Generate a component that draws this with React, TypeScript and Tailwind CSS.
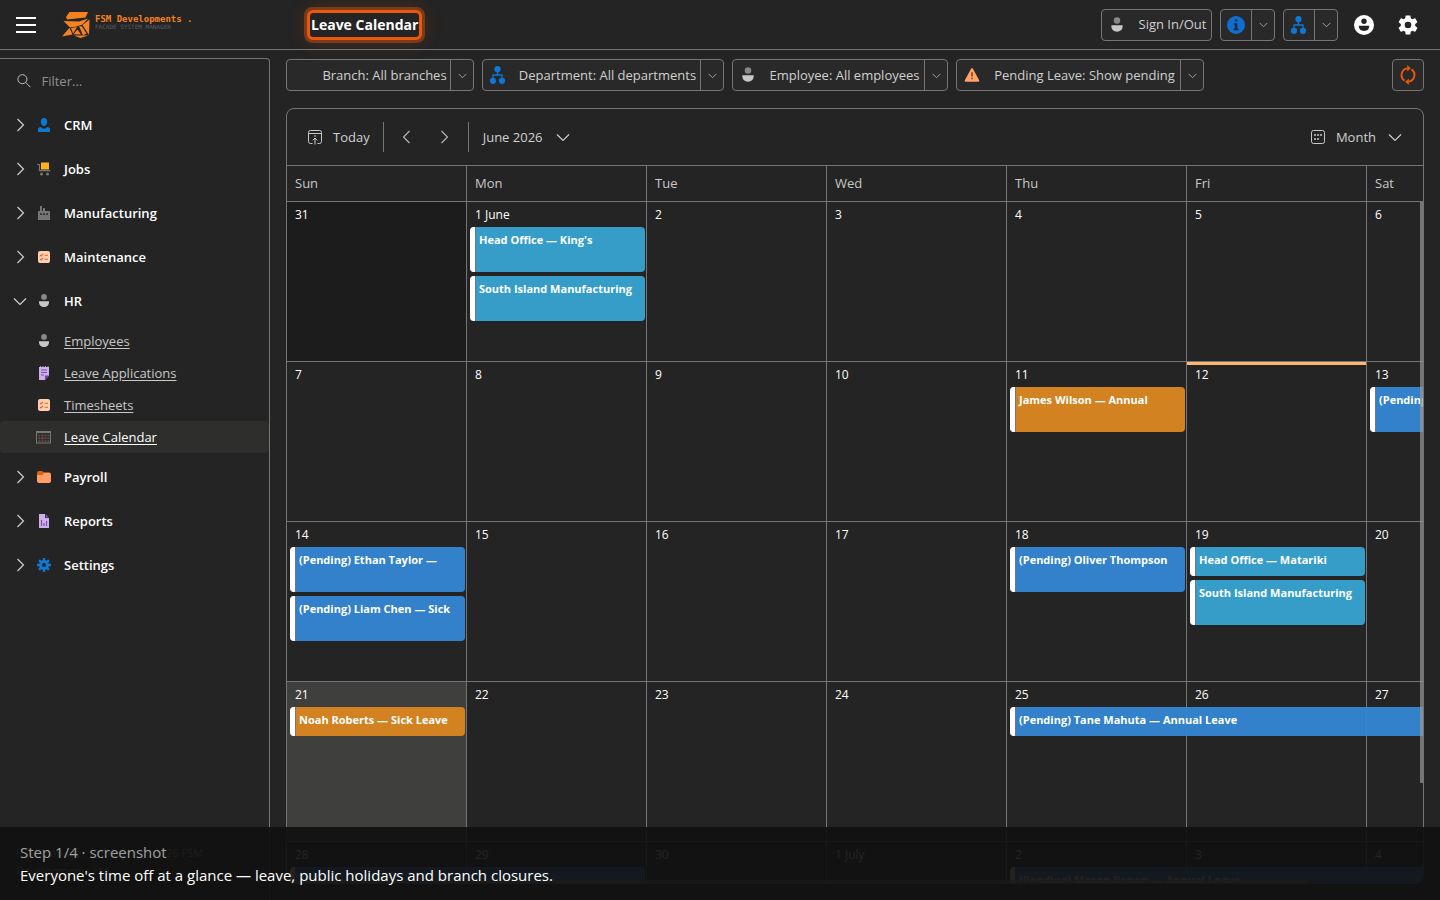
import { useState, type ReactNode } from "react";

type IconProps = { size?: number };

function PersonIcon({ size = 16 }: IconProps) {
  return (
    <svg width={size} height={size} viewBox="0 0 16 16" aria-hidden="true">
      <circle cx="8" cy="3.9" r="2.9" fill="#888" />
      <path d="M3 8.2h10v1c0 3-2.200 4.800-5 4.800s-5-1.800-5-4.800z" fill="#c8c8c8" />
    </svg>
  );
}

function OrgIcon({ size = 18 }: IconProps) {
  return (
    <svg width={size} height={size} viewBox="0 0 18 18" className="shrink-0" aria-hidden="true">
      <circle cx="8.500" cy="3.200" r="3.100" fill="#0f78d4" />
      <circle cx="4" cy="14.800" r="3.100" fill="#0f78d4" />
      <circle cx="13" cy="14.800" r="3.100" fill="#0f78d4" />
      <path d="M8.500 5v4M4 12V9h9v3" fill="none" stroke="#0f78d4" strokeWidth="1.300" />
    </svg>
  );
}

function InfoIcon() {
  return (
    <svg width="18" height="18" viewBox="0 0 18 18" aria-hidden="true">
      <circle cx="9" cy="9" r="9" fill="#0f6fd0" />
      <path d="M7.900 3.400h2.400v2.200H7.900zM6.800 7.200h3.500v5.400h1.200v1.600H6.600v-1.600h1.300V8.800H6.800z" fill="#1f2a33" />
    </svg>
  );
}

function WarningIcon() {
  return (
    <svg width="16" height="16" viewBox="0 0 18 18" aria-hidden="true">
      <path d="M9 2.200 16.200 15.500H1.800z" fill="#ffa36b" stroke="#ffa36b" strokeWidth="2" strokeLinejoin="round" />
      <path d="M8.200 6h1.700v4.600H8.200zM8.200 12h1.700v1.700H8.200z" fill="#8a3a10" />
    </svg>
  );
}

function UserIcon() {
  return (
    <svg width="16" height="16" viewBox="0 0 16 16" aria-hidden="true">
      <path d="M8 1c2 0 3.200 1.400 3.200 3.400C11.200 7 9.800 9 8 9S4.800 7 4.800 4.400C4.800 2.400 6 1 8 1z" fill="#0f78d4" />
      <path d="M2 15v-2.500c0-1.300 1-2.200 3-2.500.6 1 1.600 1.600 3 1.600s2.400-.6 3-1.600c2 .3 3 1.200 3 2.500V15z" fill="#0f78d4" />
    </svg>
  );
}

function CartIcon() {
  return (
    <svg width="16" height="16" viewBox="0 0 16 16" aria-hidden="true">
      <rect x="5" y="1.500" width="8" height="7" fill="#ffb01f" />
      <path d="M1 3.500h2.500v6.200h10.800" fill="none" stroke="#777" strokeWidth="1.200" />
      <circle cx="5.500" cy="12.900" r="1.500" fill="#777" />
      <circle cx="11.500" cy="12.900" r="1.500" fill="#777" />
    </svg>
  );
}

function FactoryIcon() {
  return (
    <svg width="16" height="16" viewBox="0 0 16 16" aria-hidden="true">
      <path d="M2 15V6h2V1h2v5h1V3h2v3h5v9z" fill="#757575" />
      <path d="M4 8.200h2v1.800H4zM7 8.200h2v1.800H7zM10 8.200h2v1.800h-2z" fill="#333" />
    </svg>
  );
}

function ChecklistIcon() {
  return (
    <svg width="16" height="16" viewBox="0 0 16 16" aria-hidden="true">
      <rect x="2" y="2" width="12" height="12" rx="2" fill="#ffcfb3" />
      <path
        d="m4 6 1 1 2-2M8.500 6.200H12M4 10l1 1 2-2M8.500 10.300H12"
        fill="none"
        stroke="#e06a20"
        strokeWidth="1.100"
      />
    </svg>
  );
}

function NoteIcon() {
  return (
    <svg width="16" height="16" viewBox="0 0 16 16" aria-hidden="true">
      <path d="M3 2h10v8.500L9 15H3z" fill="#cdb0e6" />
      <path d="M4 1.200h1v1H4zM6.500 1.200h1v1h-1zM9 1.200h1v1H9zM11.500 1.200h1v1h-1z" fill="#cdb0e6" />
      <path d="M5 5h6M5 7.500h6M5 10h3" stroke="#7a4fb0" strokeWidth="1.100" />
      <path d="M13 10.500H9V15z" fill="#6b3fa0" />
    </svg>
  );
}

function CalendarGridIcon() {
  return (
    <svg width="16" height="16" viewBox="0 0 16 16" aria-hidden="true">
      <rect x="0.500" y="2.500" width="14" height="11.500" fill="none" stroke="#777" />
      <path d="M0 2h15v2H0z" fill="#777" />
      <path d="M2.500 6.500h11M2.500 9.200h11M2.500 12h11" stroke="#555" strokeWidth="1.600" strokeDasharray="1.800 1.200" />
      <rect x="5.500" y="8.300" width="2" height="2" fill="#d02020" />
    </svg>
  );
}

function FolderIcon() {
  return (
    <svg width="16" height="16" viewBox="0 0 16 16" aria-hidden="true">
      <rect x="1" y="3.500" width="14" height="10.500" rx="2" fill="#ff9e66" />
      <path d="M1 6V4a2 2 0 0 1 2-2h3l2 2-1.500 2z" fill="#e2610e" />
    </svg>
  );
}

function ReportIcon() {
  return (
    <svg width="16" height="16" viewBox="0 0 16 16" aria-hidden="true">
      <path d="M3 1h6v4h4v10H3z" fill="#cdb0e6" />
      <path d="M9.500 1 13 4.500H9.500z" fill="#7a4fb0" />
      <path d="M5.500 7v6M8 10v3M10.500 8v5" stroke="#7a4fb0" strokeWidth="1.200" />
    </svg>
  );
}

const GEAR =
  "M19.140 12.940c.04-.3.06-.61.06-.94s-.02-.64-.07-.94l2.030-1.580c.18-.14.23-.41.12-.61l-1.920-3.320c-.12-.22-.37-.29-.59-.22l-2.390.96c-.5-.38-1.030-.7-1.620-.94l-.36-2.540c-.04-.24-.24-.41-.48-.41h-3.840c-.24 0-.43.17-.47.41l-.36 2.540c-.59.24-1.130.57-1.620.94l-2.390-.96c-.22-.08-.47 0-.59.22L2.740 8.870c-.12.21-.08.47.12.61l2.030 1.580c-.05.3-.09.63-.09.94s.02.64.07.94l-2.030 1.580c-.18.14-.23.41-.12.61l1.920 3.320c.12.22.37.29.59.22l2.390-.96c.5.38 1.030.7 1.620.94l.36 2.540c.05.24.24.41.48.41h3.840c.24 0 .44-.17.47-.41l.36-2.540c.59-.24 1.130-.56 1.620-.94l2.390.96c.22.08.47 0 .59-.22l1.920-3.320c.12-.22.07-.47-.12-.61z";

function GearIcon() {
  return (
    <svg width="24" height="24" viewBox="0 0 24 24" aria-hidden="true">
      <path d={GEAR} fill="#fff" />
      <circle cx="12" cy="12" r="3.300" fill="#242424" />
    </svg>
  );
}

function CogIcon() {
  return (
    <svg width="16" height="16" viewBox="0 0 16 16" aria-hidden="true">
      <path d="M8 1v14M1 8h14M3.050 3.050l9.900 9.900M12.950 3.050l-9.900 9.900" stroke="#0f78d4" strokeWidth="2.400" />
      <circle cx="8" cy="8" r="5" fill="#0f78d4" />
      <circle cx="8" cy="8" r="2" fill="#242424" />
    </svg>
  );
}

function AccountIcon() {
  return (
    <svg width="20" height="20" viewBox="0 0 20 20" aria-hidden="true">
      <circle cx="10" cy="10" r="10" fill="#fff" />
      <circle cx="10" cy="6.200" r="2.700" fill="#242424" />
      <path d="M4.800 10.800h10.400c0 3.400-2 5.200-5.200 5.200s-5.200-1.800-5.200-5.200z" fill="#242424" />
    </svg>
  );
}

function RefreshIcon() {
  return (
    <svg width="20" height="20" viewBox="0 0 20 20" fill="none" stroke="#ea580c" strokeWidth="1.900" aria-hidden="true">
      <path d="M6.500 15.600A6.700 6.700 0 0 1 9.500 3.400M13.500 4.400A6.700 6.700 0 0 1 10.500 16.600" />
      <path d="M9.200 0v6.600l3.600-3.300zM10.800 20v-6.600l-3.600 3.300z" fill="#ea580c" stroke="none" />
    </svg>
  );
}

function Chevron({ dir, size = 14 }: { dir: "left" | "right" | "down"; size?: number }) {
  const d = {
    left: "M9.500 1 3.500 7l6 6",
    right: "M4.500 1l6 6-6 6",
    down: "M1 4.500 7 10.500l6-6",
  }[dir];
  return (
    <svg width={size} height={size} viewBox="0 0 14 14" fill="none" stroke="currentColor" aria-hidden="true">
      <path d={d} strokeWidth={size < 12 ? 1.400 : 1.100} />
    </svg>
  );
}

function Logo() {
  return (
    <div className="flex items-center gap-1">
      <svg width="29" height="28" viewBox="0 0 29 28" fill="#f58220" aria-hidden="true">
        <path d="M7.500 1H26l-2.500 5.500L5 8.500 4 6z" />
        <path d="M1.500 10 17 10.500l9-3-5.500 6-6 2L8 16.500z" />
        <path d="M27.500 8.500 27 24l-6.500-10z" />
        <path d="M7.500 16.800 0 25.500l10.500-2z" />
        <path d="M9 17l6-1-3.800 6.500z" />
        <path d="M17 15l3 .5 4.500 7-3.500 2z" />
        <path d="M15.500 18.500l3.500 5-7.500-.2z" />
        <path d="M12 24.500h14.500l-8 2.500z" />
      </svg>
      <div className="pb-1 font-['DejaVu_Sans_Mono',monospace] leading-none">
        <div className="text-[9px] font-bold text-[#f58220]">FSM Developments .</div>
        <div className="text-[6px] text-[#5c5c68]">FACADE SYSTEM MANAGER</div>
      </div>
    </div>
  );
}

interface SplitButtonProps {
  icon: ReactNode;
  label?: string;
  name: string;
  width: string;
}

function SplitButton({ icon, label, name, width }: SplitButtonProps) {
  return (
    <div className={`flex h-8 rounded border border-[#757575] bg-[#292929] text-[#d0d0d0] ${width}`}>
      <button type="button" aria-label={name} className="flex flex-1 items-center gap-2 pl-[6px]">
        <span className="flex w-[18px] shrink-0 justify-center">{icon}</span>
        {label && <span className="flex-1 text-center whitespace-nowrap">{label}</span>}
      </button>
      <button
        type="button"
        aria-label={`${name} options`}
        className="flex w-[23px] items-center justify-center border-l border-[#757575] text-[#adadad]"
      >
        <Chevron dir="down" size={9} />
      </button>
    </div>
  );
}

const hrLinks = [
  { label: "Employees", icon: <PersonIcon /> },
  { label: "Leave Applications", icon: <NoteIcon /> },
  { label: "Timesheets", icon: <ChecklistIcon /> },
  { label: "Leave Calendar", icon: <CalendarGridIcon />, active: true },
];

const menu = [
  { label: "CRM", icon: <UserIcon /> },
  { label: "Jobs", icon: <CartIcon /> },
  { label: "Manufacturing", icon: <FactoryIcon /> },
  { label: "Maintenance", icon: <ChecklistIcon /> },
  { label: "HR", icon: <PersonIcon />, links: hrLinks },
  { label: "Payroll", icon: <FolderIcon /> },
  { label: "Reports", icon: <ReportIcon /> },
  { label: "Settings", icon: <CogIcon /> },
];

function Sidebar() {
  const [open, setOpen] = useState("HR");

  return (
    <aside className="mt-2 flex w-[270px] shrink-0 flex-col rounded-tr border-t border-r border-[#757575]">
      <label className="flex h-11 items-center gap-[10px] pl-[17px]">
        <svg width="16" height="16" viewBox="0 0 16 16" fill="none" stroke="#c0c0c0" strokeWidth="1.100" aria-hidden="true">
          <circle cx="6" cy="6" r="5" />
          <path d="m9.600 9.600 5.400 5.400" />
        </svg>
        <input
          type="text"
          aria-label="Filter menu"
          placeholder="Filter..."
          className="w-full bg-transparent outline-none placeholder:text-[#8f8f8f]"
        />
      </label>
      <nav>
        {menu.map((m) => (
          <div key={m.label}>
            <button
              type="button"
              onClick={() => setOpen(open === m.label ? "" : m.label)}
              className="flex h-11 w-full items-center pl-[13px] font-semibold text-white"
            >
              <span className="mr-[9px] text-[#d6d6d6]">
                <Chevron dir={open === m.label ? "down" : "right"} />
              </span>
              <span className="mr-3">{m.icon}</span>
              {m.label}
            </button>
            {m.links && open === m.label && (
              <ul className="py-[2px]">
                {m.links.map((l) => (
                  <li key={l.label}>
                    <a
                      href="#"
                      className={
                        l.active
                          ? "flex h-8 items-center gap-3 rounded bg-[#2e2e2d] pl-9 text-white underline underline-offset-2"
                          : "flex h-8 items-center gap-3 pl-9 text-[#c8c8c8] underline underline-offset-2"
                      }
                    >
                      {l.icon}
                      {l.label}
                    </a>
                  </li>
                ))}
              </ul>
            )}
          </div>
        ))}
      </nav>
      <footer className="mt-auto mb-5 pl-4 text-[11px] leading-[18px] text-[#adadad]">
        FSM Manager © Copyright 2026 FSM
        <br />
        Developments Ltd
      </footer>
    </aside>
  );
}

interface CalEvent {
  title: string;
  kind: "holiday" | "leave" | "pending";
  short?: boolean;
  span?: number;
}

const kindColor = {
  holiday: "bg-[#37a4d2]/95",
  leave: "bg-[#d28220]",
  pending: "bg-[#3487d4]/95",
};

const spanWidth: Record<number, string> = {
  1: "w-[175px]",
  2: "w-[355px]",
  3: "w-[535px]",
};

const days = ["Sun", "Mon", "Tue", "Wed", "Thu", "Fri", "Sat"];

const weeks = [
  ["31", "1 June", "2", "3", "4", "5", "6"],
  ["7", "8", "9", "10", "11", "12", "13"],
  ["14", "15", "16", "17", "18", "19", "20"],
  ["21", "22", "23", "24", "25", "26", "27"],
  ["28", "29", "30", "1 July", "2", "3", "4"],
];

// keyed by "week-day"
const events: Record<string, CalEvent[]> = {
  "0-1": [
    { title: "Head Office — King's", kind: "holiday" },
    { title: "South Island Manufacturing", kind: "holiday" },
  ],
  "1-4": [{ title: "James Wilson — Annual", kind: "leave" }],
  "1-6": [{ title: "(Pending)", kind: "pending" }],
  "2-0": [
    { title: "(Pending) Ethan Taylor —", kind: "pending" },
    { title: "(Pending) Liam Chen — Sick", kind: "pending" },
  ],
  "2-4": [{ title: "(Pending) Oliver Thompson", kind: "pending" }],
  "2-5": [
    { title: "Head Office — Matariki", kind: "holiday", short: true },
    { title: "South Island Manufacturing", kind: "holiday" },
  ],
  "3-0": [{ title: "Noah Roberts — Sick Leave", kind: "leave", short: true }],
  "3-4": [{ title: "(Pending) Tane Mahuta — Annual Leave", kind: "pending", short: true, span: 3 }],
  "4-0": [{ title: "", kind: "pending", short: true, span: 2 }],
  "4-4": [{ title: "(Pending) Mason Brown — Annual Leave", kind: "pending", short: true, span: 3 }],
};

function EventCard({ event }: { event: CalEvent }) {
  return (
    <div
      className={`relative z-10 mb-1 ml-[3px] flex overflow-hidden rounded ${kindColor[event.kind]} ${
        spanWidth[event.span ?? 1]
      } ${event.short ? "h-[29px]" : "h-[45px]"}`}
    >
      <span className="w-[6px] shrink-0 border-r border-[#757575] bg-white" />
      <span className="pt-1 pl-[3px] text-[11px] leading-[18px] font-bold whitespace-nowrap text-white">
        {event.title}
      </span>
    </div>
  );
}

function cellTone(week: number, day: number) {
  if (week === 0 && day === 0) return "bg-[#1c1c1c]";
  if (week === 3 && day === 0) return "bg-[#3f3f3d]";
  return "";
}

function Scheduler() {
  return (
    <section className="relative mt-[17px] mb-4 flex min-h-0 flex-1 flex-col overflow-hidden rounded-lg border border-[#757575]">
      <div className="flex h-14 shrink-0 items-center pr-[21px] pl-5 text-[#d0d0d0]">
        <button type="button" className="flex items-center gap-[10px]">
          <svg width="16" height="16" viewBox="0 0 16 16" fill="none" stroke="#c8c8c8" aria-hidden="true">
            <path d="M5.500 14.500h-2a2 2 0 0 1-2-2v-9a2 2 0 0 1 2-2h9a2 2 0 0 1 2 2v9a2 2 0 0 1-2 2h-2" />
            <path d="M1.500 4.500h13M8 6v2M8 9v6.500M5.800 11.200 8 9l2.200 2.200" />
          </svg>
          Today
        </button>
        <span className="ml-[13px] h-[30px] w-px bg-[#757575]" />
        <button type="button" aria-label="Previous month" className="ml-4 text-[#b8b8b8]">
          <Chevron dir="left" />
        </button>
        <button type="button" aria-label="Next month" className="ml-[23px] text-[#b8b8b8]">
          <Chevron dir="right" />
        </button>
        <span className="ml-[17px] h-[30px] w-px bg-[#757575]" />
        <button type="button" className="ml-[14px] flex items-center gap-[13px]">
          June 2026
          <Chevron dir="down" />
        </button>
        <button type="button" className="ml-auto flex items-center gap-[10px]">
          <svg width="16" height="16" viewBox="0 0 16 16" fill="none" aria-hidden="true">
            <rect x="1.500" y="1.500" width="13" height="13" rx="2" stroke="#c8c8c8" />
            <path d="M4 6h2M7 6h2M10 6h2M4 10h2M7 10h2" stroke="#c8c8c8" strokeWidth="1.600" />
          </svg>
          <span className="mr-[2px]">Month</span>
          <Chevron dir="down" />
        </button>
      </div>
      <div className="min-h-0 flex-1 overflow-hidden border-t border-[#757575]">
        <table className="w-[1260px] table-fixed border-separate border-spacing-0">
          <thead>
            <tr>
              {days.map((d) => (
                <th
                  key={d}
                  scope="col"
                  className="h-9 border-r border-b border-[#757575] px-2 text-left font-normal text-[#c8c8c8]"
                >
                  {d}
                </th>
              ))}
            </tr>
          </thead>
          <tbody>
            {weeks.map((week, w) => (
              <tr key={w}>
                {week.map((day, d) => (
                  <td
                    key={day}
                    className={`relative h-[160px] border-r border-b border-[#757575] align-top ${cellTone(w, d)}`}
                  >
                    {day === "12" && <span className="absolute inset-x-0 top-0 h-[3px] bg-[#ffb870]" />}
                    <div className="h-[25px] pt-1 pl-2 text-[12px] leading-[18px] text-white">{day}</div>
                    {(events[`${w}-${d}`] ?? []).map((e) => (
                      <EventCard key={e.title} event={e} />
                    ))}
                  </td>
                ))}
              </tr>
            ))}
          </tbody>
        </table>
      </div>
      <span className="absolute top-[93px] right-0 z-20 h-[581px] w-[3px] bg-[#999]/70" />
      <span className="absolute bottom-0 left-0 z-20 h-[3px] w-9/10 bg-[#999]/70" />
    </section>
  );
}

export default function App() {
  return (
    <div className="relative flex h-screen flex-col overflow-hidden bg-[#242424] font-['Open_Sans','Noto_Sans',sans-serif] text-[13px] leading-[21px] text-white">
      <header className="flex h-[50px] shrink-0 items-center border-b border-[#757575] pr-4">
        <div className="flex w-[310px] shrink-0 items-center pl-4">
          <button type="button" aria-label="Menu" className="mr-[26px] flex w-5 flex-col gap-[5px]">
            <span className="h-[2px] bg-white" />
            <span className="h-[2px] bg-white" />
            <span className="h-[2px] bg-white" />
          </button>
          <Logo />
        </div>
        <h1 className="rounded-[3px] px-px text-[14px] leading-6 font-bold whitespace-nowrap shadow-[0_0_0_3px_#ea580c,0_0_0_6px_rgba(234,88,12,0.4),0_0_20px_4px_rgba(234,88,12,0.2)]">
          Leave Calendar
        </h1>
        <div className="ml-auto flex items-center gap-2">
          <button
            type="button"
            className="flex h-8 w-[111px] items-center gap-2 rounded border border-[#757575] bg-[#292929] pl-[6px] whitespace-nowrap text-[#d0d0d0]"
          >
            <PersonIcon size={18} />
            <span className="flex-1 text-center">Sign In/Out</span>
          </button>
          <SplitButton name="Information" icon={<InfoIcon />} width="w-[55px]" />
          <SplitButton name="Organisation" icon={<OrgIcon />} width="w-[55px]" />
          <button type="button" aria-label="Account" className="ml-[2px] flex size-8 items-center justify-center">
            <AccountIcon />
          </button>
          <button type="button" aria-label="Settings" className="ml-1 flex size-8 items-center justify-center">
            <GearIcon />
          </button>
        </div>
      </header>

      <div className="flex min-h-0 flex-1">
        <Sidebar />
        <main className="flex min-w-0 flex-1 flex-col pt-[9px] pr-4 pl-4">
          <div className="flex items-center gap-2">
            <SplitButton name="Branch" icon={null} label="Branch: All branches" width="w-[188px]" />
            <SplitButton
              name="Department"
              icon={<OrgIcon />}
              label="Department: All departments"
              width="w-[242px]"
            />
            <SplitButton
              name="Employee"
              icon={<PersonIcon size={18} />}
              label="Employee: All employees"
              width="w-[216px]"
            />
            <SplitButton
              name="Pending leave"
              icon={<WarningIcon />}
              label="Pending Leave: Show pending"
              width="w-[248px]"
            />
            <button
              type="button"
              aria-label="Refresh"
              className="ml-auto flex size-8 items-center justify-center rounded border border-[#757575] bg-[#292929]"
            >
              <RefreshIcon />
            </button>
          </div>
          <Scheduler />
        </main>
      </div>

      <div className="absolute inset-x-0 bottom-0 z-30 h-[73px] bg-[#111]/93 px-5 pt-[14px] text-[15px] leading-[23px]">
        <p className="text-[#a0a0a0]">Step 1/4 · screenshot</p>
        <p>Everyone's time off at a glance — leave, public holidays and branch closures.</p>
      </div>
    </div>
  );
}
